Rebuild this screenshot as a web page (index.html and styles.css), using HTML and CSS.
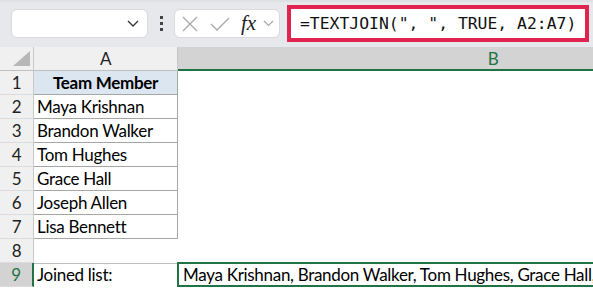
FILE: index.html
```html
<!DOCTYPE html>
<html lang="en">
<head>
<meta charset="UTF-8">
<title>TEXTJOIN</title>
<link rel="stylesheet" href="styles.css">
</head>
<body>

<div class="toolbar">
  <div class="namebox">
    <svg class="chev" width="12" height="7" viewBox="0 0 12 7"><path d="M1 1 L6 6 L11 1" fill="none" stroke="#333" stroke-width="1.3"/></svg>
  </div>
  <div class="dots"><span></span><span></span><span></span></div>
  <div class="fbuttons">
    <svg width="16" height="16" viewBox="0 0 16 16"><path d="M1 1 L15 15 M15 1 L1 15" stroke="#a8a8a8" stroke-width="1.3" fill="none"/></svg>
    <svg width="20" height="16" viewBox="0 0 20 16"><path d="M1 8 L7 14 L19 2" stroke="#a8a8a8" stroke-width="1.3" fill="none"/></svg>
    <span class="fx">fx</span>
    <svg width="11" height="7" viewBox="0 0 11 7"><path d="M1 1 L5.5 5.5 L10 1" fill="none" stroke="#a8a8a8" stroke-width="1.2"/></svg>
  </div>
  <div class="formula">=TEXTJOIN(", ", TRUE, A2:A7)</div>
</div>

<div class="sheet">
  <div class="corner"><svg width="17" height="15" viewBox="0 0 17 15"><polygon points="17,0 17,15 0,15" fill="#b7b7b7"/></svg></div>
  <div class="ch">A</div>
  <div class="ch sel">B</div>

  <div class="rh">1</div><div class="cell tbl head">Team Member</div><div class="cell"></div>
  <div class="rh">2</div><div class="cell tbl">Maya Krishnan</div><div class="cell"></div>
  <div class="rh">3</div><div class="cell tbl">Brandon Walker</div><div class="cell"></div>
  <div class="rh">4</div><div class="cell tbl">Tom Hughes</div><div class="cell"></div>
  <div class="rh">5</div><div class="cell tbl">Grace Hall</div><div class="cell"></div>
  <div class="rh">6</div><div class="cell tbl">Joseph Allen</div><div class="cell"></div>
  <div class="rh">7</div><div class="cell tbl">Lisa Bennett</div><div class="cell"></div>
  <div class="rh">8</div><div class="cell"></div><div class="cell"></div>
  <div class="rh sel">9</div><div class="cell lbl">Joined list:</div><div class="cell active">Maya Krishnan, Brandon Walker, Tom Hughes, Grace Hall, Joseph Allen, Lisa Bennett</div>
</div>

</body>
</html>
```

FILE: styles.css
```css
body {
  margin: 0;
  width: 593px;
  height: 288px;
  overflow: hidden;
  background: #fff;
  font-family: 'Lato', 'Liberation Sans', sans-serif;
  color: #000;
}
.toolbar {
  height: 47px;
  box-sizing: border-box;
  background: #e7e8ec;
  border-top: 2px solid #dfe0e4;
  display: flex;
  align-items: flex-start;
  padding: 7px 0 0 11px;
}
.namebox {
  width: 137px;
  height: 29px;
  box-sizing: border-box;
  background: #fff;
  border: 1px solid #d9d9dc;
  border-radius: 6px;
  display: flex;
  align-items: center;
  justify-content: flex-end;
  padding-right: 8px;
}
.dots {
  width: 26px;
  height: 29px;
  display: flex;
  flex-direction: column;
  align-items: center;
  justify-content: center;
  gap: 3px;
}
.dots span {
  width: 3px;
  height: 3px;
  background: #444;
}
.fbuttons {
  width: 106px;
  height: 29px;
  box-sizing: border-box;
  background: #fff;
  border: 1px solid #d9d9dc;
  border-radius: 6px;
  display: flex;
  align-items: center;
  padding-left: 7px;
  gap: 12px;
}
.fx {
  font-family: 'Liberation Serif', serif;
  font-style: italic;
  font-size: 21px;
  color: #222;
  margin-right: -5px;
  margin-left: -1px;
}
.formula {
  margin: -4px 0 0 7px;
  width: 302px;
  flex-shrink: 0;
  height: 37px;
  box-sizing: border-box;
  background: #fff;
  border: 4px solid #e1234f;
  font-family: 'DejaVu Sans Mono', 'Liberation Mono', monospace;
  font-size: 16.4px;
  line-height: 29px;
  padding-left: 9px;
  color: #111;
  white-space: nowrap;
}
.sheet {
  display: grid;
  grid-template-columns: 34px 144px 630px;
  grid-auto-rows: 24px;
  font-size: 17px;
  letter-spacing: -0.3px;
  line-height: 24px;
}
.sheet > div {
  box-sizing: border-box;
  white-space: nowrap;
  overflow: hidden;
}
.corner {
  background: #f0f0f0;
  border-right: 1px solid #c8c8c8;
  border-bottom: 1px solid #c0c0c0;
  display: flex;
  align-items: flex-end;
  justify-content: flex-end;
  padding: 0 3px 4px 0;
}
.ch {
  background: #f0f0f0;
  border-right: 1px solid #c8c8c8;
  border-bottom: 1px solid #c0c0c0;
  text-align: center;
  color: #222;
}
.ch.sel {
  background: #d3d3d3;
  border-bottom: 2px solid #217346;
  border-right: none;
  color: #217346;
}
.rh {
  background: #f0f0f0;
  border-right: 1px solid #c8c8c8;
  border-bottom: 1px solid #dcdcdc;
  text-align: center;
  color: #222;
}
.rh.sel {
  background: #d3d3d3;
  border-right: 2px solid #217346;
  color: #217346;
}
.cell {
  padding-left: 3px;
}
.tbl {
  border-right: 1px solid #a6a6a6;
  border-bottom: 1px solid #a6a6a6;
}
.head {
  background: #dce6f1;
  font-weight: bold;
  text-align: center;
  padding-left: 0;
}
.lbl {
  border-top: 1px solid #bdbdbd;
  line-height: 22px;
}
.active {
  border: 2px solid #217346;
  margin-left: -1px;
  margin-top: -1px;
  height: 25px;
  line-height: 21px;
  padding-left: 4px;
}
```
